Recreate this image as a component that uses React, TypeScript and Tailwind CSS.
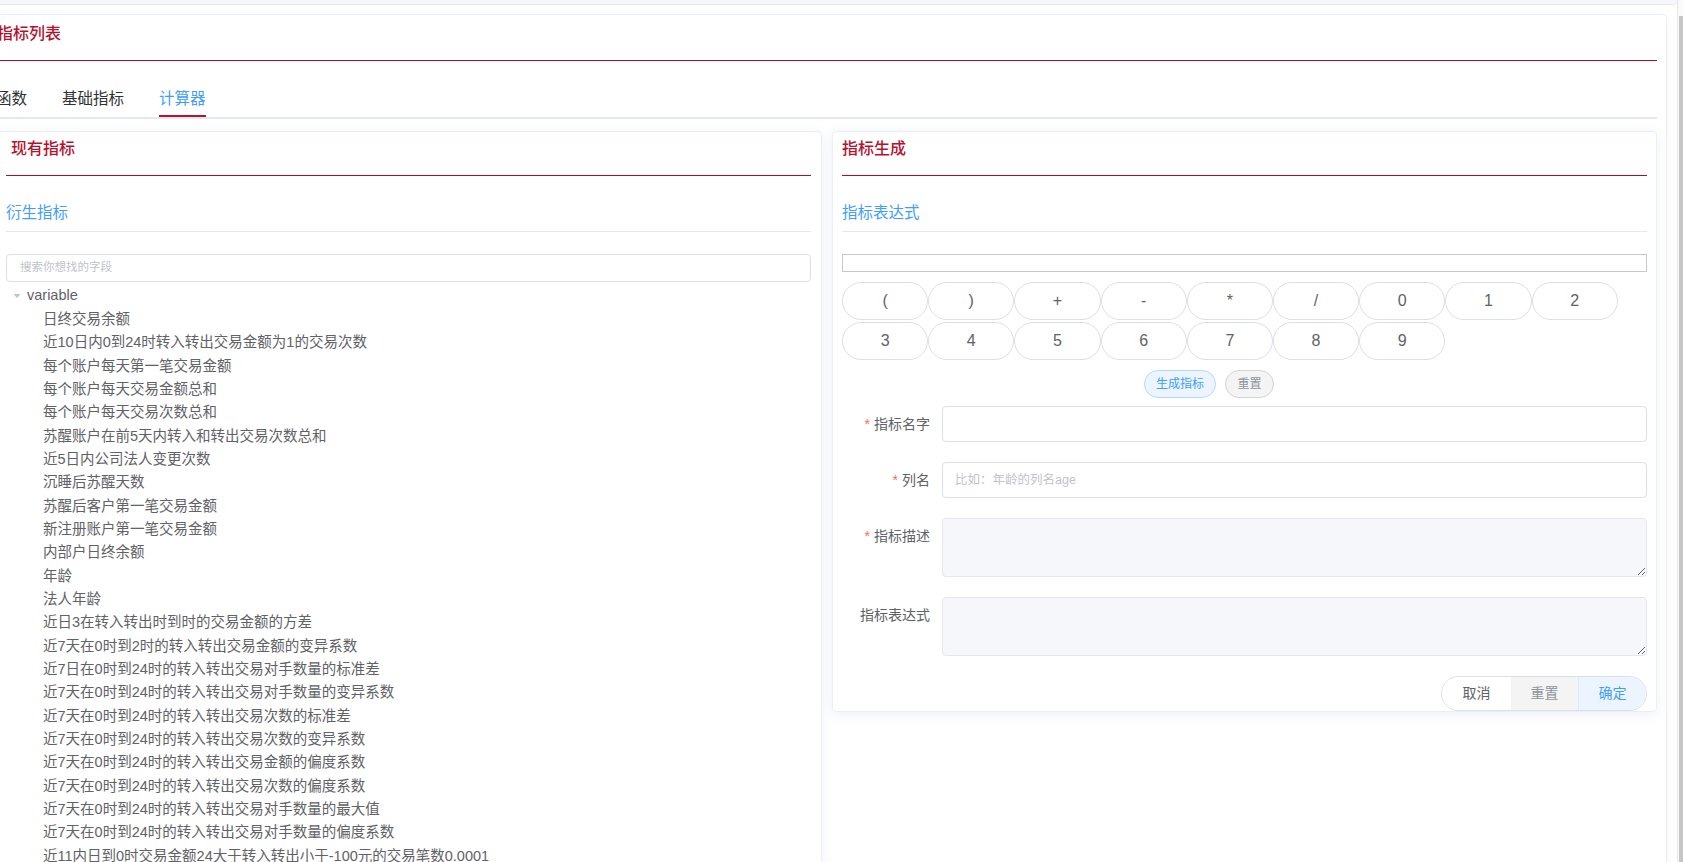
const treeItems = [
  "日终交易余额",
  "近10日内0到24时转入转出交易金额为1的交易次数",
  "每个账户每天第一笔交易金额",
  "每个账户每天交易金额总和",
  "每个账户每天交易次数总和",
  "苏醒账户在前5天内转入和转出交易次数总和",
  "近5日内公司法人变更次数",
  "沉睡后苏醒天数",
  "苏醒后客户第一笔交易金额",
  "新注册账户第一笔交易金额",
  "内部户日终余额",
  "年龄",
  "法人年龄",
  "近日3在转入转出时到时的交易金额的方差",
  "近7天在0时到2时的转入转出交易金额的变异系数",
  "近7日在0时到24时的转入转出交易对手数量的标准差",
  "近7天在0时到24时的转入转出交易对手数量的变异系数",
  "近7天在0时到24时的转入转出交易次数的标准差",
  "近7天在0时到24时的转入转出交易次数的变异系数",
  "近7天在0时到24时的转入转出交易金额的偏度系数",
  "近7天在0时到24时的转入转出交易次数的偏度系数",
  "近7天在0时到24时的转入转出交易对手数量的最大值",
  "近7天在0时到24时的转入转出交易对手数量的偏度系数",
  "近11内日到0时交易金额24大于转入转出小于-100元的交易笔数0.0001",
  "近7天在0时到24时的转入转出交易金额的最大值",
  "近7天在0时到24时的转入转出交易金额的最小值",
];

const calcKeys = ["(", ")", "+", "-", "*", "/", "0", "1", "2", "3", "4", "5", "6", "7", "8", "9"];

const formRows = [
  { label: "指标名字", required: true, type: "input", placeholder: "" },
  { label: "列名", required: true, type: "input", placeholder: "比如：年龄的列名age" },
  { label: "指标描述", required: true, type: "textarea", placeholder: "" },
  { label: "指标表达式", required: false, type: "textarea", placeholder: "" },
];

const CardTitle = ({ text, indent, top }: { text: string; indent?: boolean; top?: boolean }) => (
  <div
    className={`pb-[12px] leading-[28px] border-b border-[#a8102a] text-[16px] font-medium text-[#b5122e] ${top ? "pt-[5px]" : "pt-[3px]"} ${indent ? "pl-[5px]" : ""}`}
  >
    {text}
  </div>
);

const SectionTitle = ({ text }: { text: string }) => (
  <div className="mt-[27px] leading-[20px] pb-[8px] border-b border-[#e4e7ed] text-[15.5px] text-[#409eff]">
    {text}
  </div>
);

const App = () => {
  return (
    <div className="h-screen overflow-hidden bg-white flex font-[family-name:'Liberation_Sans','Noto_Sans_CJK_SC',sans-serif]">
      <div className="flex-1 min-w-0 flex flex-col">
        {/* strip of the block above */}
        <div className="h-[5px] shrink-0 bg-[#f5f7fc] border-b border-[#e4e8f0] rounded-br-[4px]" />

        <div className="mt-[9px] ml-[-23px] mr-[10px] shrink-0 border border-[#ebeef5] rounded-[4px] pl-[19px] pr-[9px] shadow-[0_2px_10px_rgba(90,110,180,0.06)]">
          <CardTitle text="指标列表" top />

          {/* Tabs */}
          <div className="mt-[20px] flex gap-[35px] border-b-2 border-[#e4e7ed]">
            <div className="h-[36px] leading-[36px] text-[15.5px] text-[#303133] ml-[-1px]">函数</div>
            <div className="h-[36px] leading-[36px] text-[15.5px] text-[#303133]">基础指标</div>
            <div className="h-[36px] leading-[36px] text-[15.5px] text-[#409eff] border-b-2 border-[#b5122e] -mb-[2px]">
              计算器
            </div>
          </div>

          <div className="mt-[12px] grid grid-cols-[825px_825px] gap-[10px] items-start">
            {/* Left card */}
            <div className="border border-[#ebeef5] rounded-[4px] pl-[8px] pr-[10px] shadow-[0_2px_12px_rgba(90,110,200,0.08)] min-h-[800px]">
              <CardTitle text="现有指标" indent />
              <SectionTitle text="衍生指标" />
              <div className="mt-[22px] h-[28px] border border-[#dcdfe6] rounded-[4px] px-[13px] flex items-center text-[11.5px] text-[#c0c4cc]">
                搜索你想找的字段
              </div>
              <div className="mt-[1px] text-[14.5px] text-[#606266]">
                <div className="h-[25px] flex items-center pl-[7px]">
                  <svg width="8" height="6" viewBox="0 0 8 6" className="mr-[6px]">
                    <polygon points="0.5,1 7.5,1 4,5" fill="#c0c4cc" />
                  </svg>
                  variable
                </div>
                {treeItems.map((item, index) => (
                  <div key={index} className="h-[23.33px] leading-[23.33px] pl-[37px] whitespace-nowrap">
                    {item}
                  </div>
                ))}
              </div>
            </div>

            {/* Right card */}
            <div className="border border-[#ebeef5] rounded-[4px] px-[9px] shadow-[0_2px_12px_rgba(90,110,200,0.1)]">
              <CardTitle text="指标生成" />
              <SectionTitle text="指标表达式" />
              <div className="mt-[22px] h-[18px] border border-[#c8c8c8]" />

              <div className="mt-[10px] flex flex-wrap gap-y-[2px]">
                {calcKeys.map((key) => (
                  <button
                    key={key}
                    className="w-[86.2px] h-[38px] rounded-full border border-[#dcdfe6] bg-white text-[16px] text-[#606266]"
                  >
                    {key}
                  </button>
                ))}
              </div>

              <div className="mt-[10px] pl-[302px] flex gap-[9px]">
                <button className="w-[72px] h-[28px] rounded-full border border-[#b3d8ff] bg-[#ecf5ff] text-[12px] text-[#409eff]">
                  生成指标
                </button>
                <button className="w-[49px] h-[28px] rounded-full border border-[#d3d4d6] bg-[#f4f4f5] text-[12px] text-[#909399]">
                  重置
                </button>
              </div>

              <div className="mt-[8px] flex flex-col gap-[20px]">
                {formRows.map((row) => (
                  <div key={row.label} className="flex">
                    <div className="w-[100px] pr-[12px] text-right leading-[36px] text-[14px] text-[#606266] shrink-0">
                      {row.required && <span className="text-[#f56c6c] mr-[4px]">*</span>}
                      {row.label}
                    </div>
                    {row.type === "input" ? (
                      <input
                        placeholder={row.placeholder}
                        className="flex-1 min-w-0 h-[36px] border border-[#dcdfe6] rounded-[4px] px-[12px] text-[12.5px] text-[#606266] placeholder:text-[#c0c4cc] outline-none"
                      />
                    ) : (
                      <textarea
                        readOnly
                        className="flex-1 min-w-0 h-[59px] border border-[#e4e7ed] rounded-[4px] bg-[#f5f7fa] px-[12px] py-[6px] outline-none"
                      />
                    )}
                  </div>
                ))}
              </div>

              <div className="mt-[20px] flex justify-end">
                <div className="flex h-[35px] rounded-full border border-[#dcdfe6] overflow-hidden text-[14px]">
                  <button className="w-[69px] bg-white text-[#606266]">取消</button>
                  <button className="w-[67px] bg-[#f4f4f5] text-[#909399]">重置</button>
                  <button className="w-[68px] bg-[#ecf5ff] text-[#409eff] border-l border-[#d9ecff]">确定</button>
                </div>
              </div>
            </div>
          </div>
        </div>
      </div>

      {/* scrollbar */}
      <div className="w-[6px] border-l border-[#e8e8e8] bg-[#fafafa] flex flex-col">
        <div className="mt-[16px] flex-1 ml-auto w-[4px] bg-[#c6c6c6]" />
      </div>
    </div>
  );
};

export default App;
